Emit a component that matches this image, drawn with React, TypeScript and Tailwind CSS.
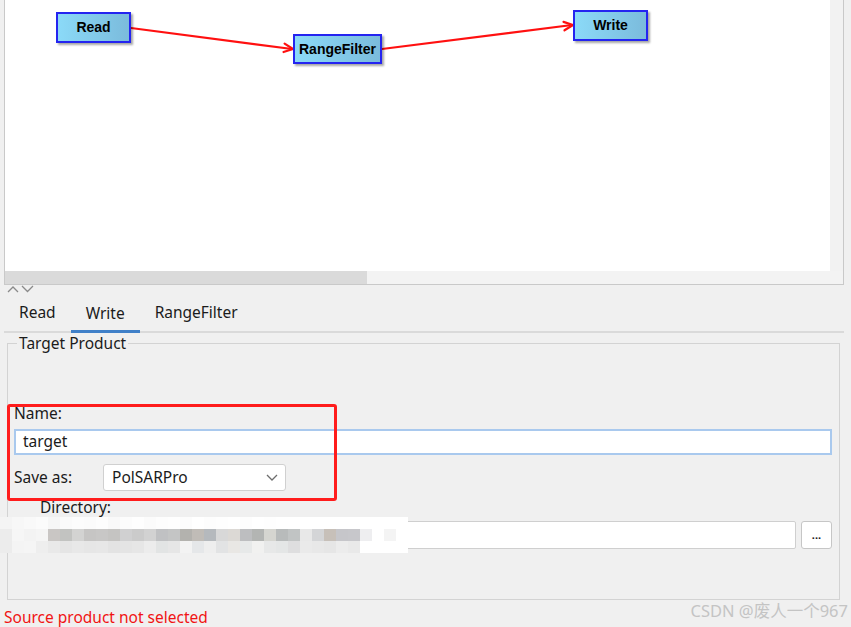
import React from "react";

// Graph node on the free canvas
interface GraphNode {
  label: string;
  pos: string;
}

const nodes: GraphNode[] = [
  { label: "Read", pos: "left-[51px] top-[12px] w-[75px] h-[31px]" },
  { label: "RangeFilter", pos: "left-[288px] top-[34px] w-[89px] h-[30px]" },
  { label: "Write", pos: "left-[568px] top-[10px] w-[75px] h-[31px]" },
];

// mosaic that hides the directory path
const mosaicTop = [
  "bg-[#f4f4f4]", "bg-[#f7f7f7]", "bg-[#f9f9f9]", "bg-[#fbfbfb]", "bg-[#f6f6f6]", "bg-[#fafafa]",
  "bg-[#fcfcfc]", "bg-[#fbfbfb]", "bg-[#fdfdfd]", "bg-[#f9f9f9]", "bg-[#fcfcfc]", "bg-[#fefefe]",
  "bg-[#fbfbfb]", "bg-[#fdfdfd]", "bg-[#fefefe]", "bg-[#fcfcfc]", "bg-[#ffffff]", "bg-[#fdfdfd]",
  "bg-[#fefefe]", "bg-[#ffffff]", "bg-[#fdfdfd]", "bg-[#ffffff]", "bg-[#fefefe]", "bg-[#ffffff]",
  "bg-[#ffffff]", "bg-[#ffffff]", "bg-[#ffffff]", "bg-[#ffffff]", "bg-[#ffffff]", "bg-[#ffffff]",
  "bg-[#ffffff]", "bg-[#ffffff]", "bg-[#ffffff]", "bg-[#ffffff]",
];
const mosaicMid = [
  "bg-[#ececec]", "bg-[#f6f6f6]", "bg-[#f3f3f3]", "bg-[#f5f5f5]", "bg-[#c9c6c4]", "bg-[#c2c3c1]",
  "bg-[#d3d3d2]", "bg-[#c6c5c4]", "bg-[#c8c7c6]", "bg-[#c5c4c2]", "bg-[#d0d0d1]", "bg-[#cbcbcb]",
  "bg-[#d2d2d2]", "bg-[#c0c1c3]", "bg-[#c4c5c5]", "bg-[#b3b2ae]", "bg-[#c0bcb7]", "bg-[#b5b9bd]",
  "bg-[#d8d8d8]", "bg-[#dcd9d5]", "bg-[#bdbec0]", "bg-[#b3b5b3]", "bg-[#d5d5d0]", "bg-[#b8bbbb]",
  "bg-[#c1c4c4]", "bg-[#e8e8e8]", "bg-[#d4d5d7]", "bg-[#c7c0b9]", "bg-[#c6c6ca]", "bg-[#c7c7cb]",
  "bg-[#eeeef0]", "bg-[#ffffff]", "bg-[#f4f4f4]", "bg-[#ffffff]",
];
const mosaicLow = [
  "bg-[#ececec]", "bg-[#f4f4f4]", "bg-[#f5f5f5]", "bg-[#eeeeee]", "bg-[#e9e9e9]", "bg-[#e5e5e5]",
  "bg-[#e8e8e8]", "bg-[#e6e6e6]", "bg-[#e7e7e7]", "bg-[#e3e3e3]", "bg-[#e4e4e4]", "bg-[#e6e6e6]",
  "bg-[#ececec]", "bg-[#e2e4e4]", "bg-[#e6e6e6]", "bg-[#f3f3f3]", "bg-[#e5e7e9]", "bg-[#eeeeee]",
  "bg-[#e2e3e4]", "bg-[#e9e7e4]", "bg-[#e7e9e9]", "bg-[#f1f1f0]", "bg-[#e7e8e8]", "bg-[#e4e6e6]",
  "bg-[#dededf]", "bg-[#eaeaea]", "bg-[#e8e8e8]", "bg-[#e6e6e6]", "bg-[#ececec]", "bg-[#e9e9e9]",
  "bg-[#ffffff]", "bg-[#ffffff]", "bg-[#ffffff]", "bg-[#ffffff]",
];

function Canvas(): JSX.Element {
  return (
    <div className="ml-[4px] w-[840px] h-[285px] border-x border-b border-[#c9c9c9] flex flex-col">
      <div className="flex h-[271px]">
        <div className="relative flex-1 bg-white">
          {/* connections */}
          <svg className="absolute inset-0" width="825" height="271">
            <g stroke="#ff1010" strokeWidth="2.2" fill="none" strokeLinejoin="round" strokeLinecap="round">
              <line x1="126" y1="28" x2="287" y2="49" />
              <polyline points="279.6,43.6 288,49 278.5,52" />
              <line x1="377" y1="49" x2="567" y2="25" />
              <polyline points="558.5,21.9 568,25 559.5,30.3" />
            </g>
          </svg>
          {nodes.map((n) => (
            <div
              key={n.label}
              className={`absolute ${n.pos} flex items-center justify-center border-2 border-[#2424f0] bg-linear-to-r from-[#8bdaf8] to-[#7bbbdc] shadow-[2px_2px_2px_rgba(0,0,0,0.35)] font-['Liberation_Sans',Arial,sans-serif] font-bold text-[14px] text-black`}
            >
              {n.label}
            </div>
          ))}
        </div>
        <div className="w-[13px] bg-[#f2f2f2]" />
      </div>
      <div className="flex h-[13px] bg-[#f3f3f3]">
        <div className="w-[362px] bg-[#dadada]" />
      </div>
    </div>
  );
}

function App(): JSX.Element {
  return (
    <div className="relative w-[851px] h-[627px] overflow-hidden bg-[#f0f0f0] text-[15.5px] text-[#1b1b1b] font-['Noto_Sans','Noto_Sans_CJK_SC',sans-serif]">
      <Canvas />

      {/* collapse arrows */}
      <div className="h-[12px] pl-[7px] flex items-start gap-[2px]">
        <svg width="12" height="8" viewBox="0 0 12 8">
          <polyline points="1,7 6,2 11,7" fill="none" stroke="#8a8a8a" strokeWidth="1.3" />
        </svg>
        <svg width="13" height="8" viewBox="0 0 13 8">
          <polyline points="1,1 6.5,6.5 12,1" fill="none" stroke="#8a8a8a" strokeWidth="1.3" />
        </svg>
      </div>

      {/* tabs */}
      <div className="ml-[4px] w-[840px] h-[36px] flex border-b-2 border-[#dadada]">
        <div className="px-[15px] flex items-center pb-[3px]">Read</div>
        <div className="px-[15px] flex items-center border-b-[3px] border-[#4080c8] -mb-[2px]">Write</div>
        <div className="px-[15px] flex items-center pb-[3px]">RangeFilter</div>
      </div>

      {/* Target Product group */}
      <fieldset className="ml-[7px] w-[833px] h-[267px] border border-[#d3d3d3] pl-[6px] pr-[7px] flex flex-col">
        <legend className="ml-[3px] px-[2px] leading-[20px]">Target Product</legend>
        <div className="mt-[50px] leading-[20px] h-[20px]">Name:</div>
        <div className="mt-[6px] h-[26px] bg-white border-2 border-[#a9c9ee] flex items-center pl-[7px]">
          target
        </div>
        <div className="mt-[9px] h-[27px] flex items-center">
          <span className="w-[89px]">Save as:</span>
          <div className="w-[183px] h-[27px] bg-white border border-[#d0d0d0] rounded-[3px] flex items-center justify-between pl-[8px] pr-[7px]">
            <span>PolSARPro</span>
            <svg width="12" height="7" viewBox="0 0 12 7">
              <polyline points="1,1 6,6 11,1" fill="none" stroke="#6d6d6d" strokeWidth="1.3" />
            </svg>
          </div>
        </div>
        <div className="mt-[6px] ml-[26px] leading-[20px] h-[20px]">Directory:</div>
        <div className="mt-[4px] h-[28px] flex gap-[5px]">
          <div className="flex-1 bg-white border border-[#cfcfcf] rounded-[2px]" />
          <div className="w-[31px] bg-white border border-[#c6c6c6] rounded-[3px] flex items-center justify-center text-[11px] font-bold leading-none pb-[2px]">
            ...
          </div>
        </div>
      </fieldset>

      <div className="mt-[8px] pl-[4px] leading-[18px] text-[#f01414]">Source product not selected</div>

      {/* red highlight box */}
      <div className="absolute left-[7px] top-[404px] w-[330px] h-[97px] border-[3px] border-[#ff1c1c] rounded-[3px]" />

      {/* blurred path mosaic */}
      <div className="absolute left-0 top-[517px] flex flex-col">
        {[mosaicTop, mosaicMid, mosaicLow].map((row, i) => (
          <div key={i} className="flex">
            {row.map((c, j) => (
              <div key={j} className={`w-[12px] h-[12px] ${c}`} />
            ))}
          </div>
        ))}
      </div>

      <div className="absolute right-[3px] top-[599px] text-[16.5px] text-[#c4c4c4] font-['Noto_Sans','Noto_Sans_CJK_SC',sans-serif]">
        CSDN @废人一个967
      </div>
    </div>
  );
}

export default App;
